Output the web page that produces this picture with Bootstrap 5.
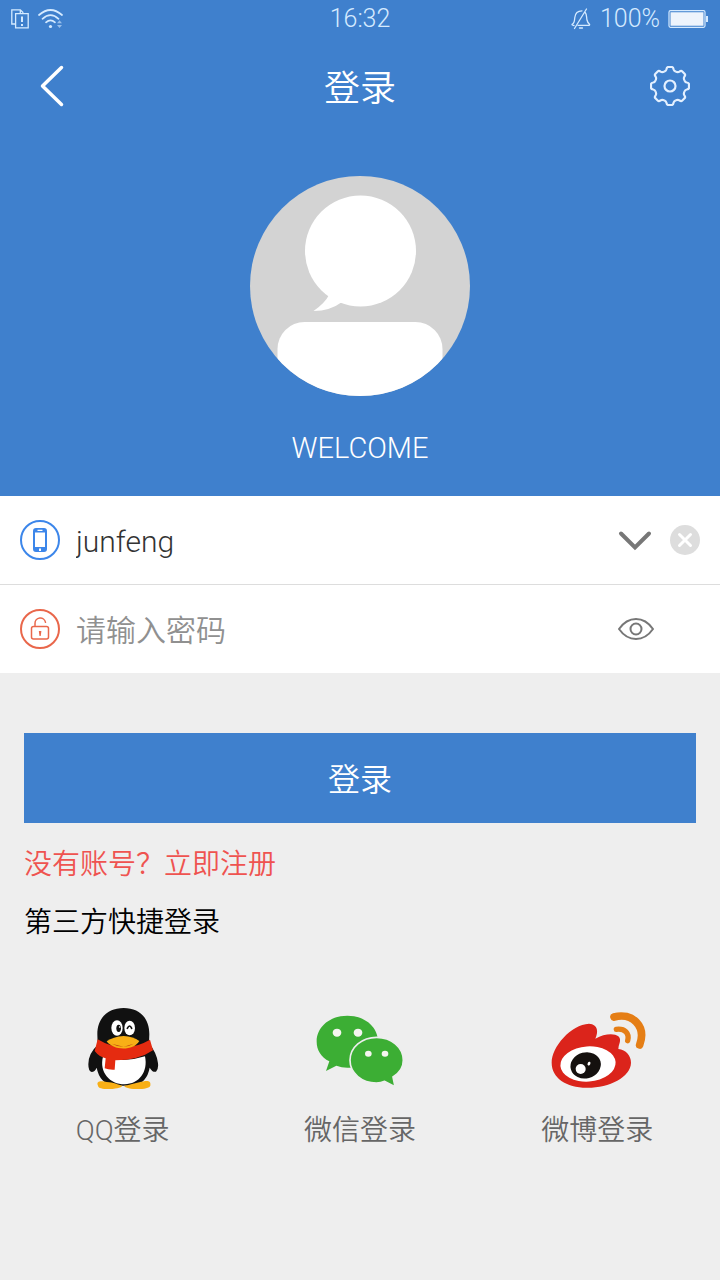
<!DOCTYPE html>
<html lang="zh-CN">
<head>
<meta charset="utf-8">
<meta name="viewport" content="width=device-width, initial-scale=1">
<title>登录</title>
<link href="https://cdn.jsdelivr.net/npm/bootstrap@5.3.0/dist/css/bootstrap.min.css" rel="stylesheet">
<style>
  :root { --brand: #3f80cd; }
  body { background: #eee; font-family: Roboto, "Noto Sans CJK SC", sans-serif; font-weight: 350; font-size: 28px; line-height: 40px; color: #000; }
  svg { display: block; flex: none; }
  .brand-area { background: var(--brand); color: #fff; }
  .status-bar { height: 38px; padding: 0 11px; color: #d5eaff; font-size: 25px; line-height: 38px; }
  .title-bar { height: 96px; padding: 0 30px; }
  .title-bar h1 { font-size: 36px; line-height: 48px; font-weight: 350; padding-top: 6px; }
  .side { flex: 1 1 0; }
  .avatar { margin-top: 42px; }
  .welcome { font-size: 29px; padding: 32px 0 28px; }
  .field { height: 88px; padding: 0 20px; gap: 16px; background: #fff; }
  .field + .field { border-top: 1px solid #ddd; height: 89px; }
  .field input { font-size: 30px; line-height: 40px; font-weight: 350; color: #333; padding-top: 4px; }
  .field input::placeholder { color: #909090; opacity: 1; }
  .field .actions { gap: 18px; }
  .no-clear { padding-right: 46px; }
  .bare { border: 0; background: none; padding: 0; color: inherit; }
  .main-area { padding: 60px 24px 0; }
  .btn-login { --bs-btn-color: #fff; --bs-btn-bg: var(--brand); --bs-btn-hover-color: #fff; --bs-btn-hover-bg: #3674be; --bs-btn-active-bg: #3069ae; --bs-btn-active-color: #fff; height: 90px; font-size: 32px; font-weight: 350; padding-top: 10px; }
  .register { color: #ef5350; margin-top: 22px; }
  .third { font-size: 28px; line-height: 40px; font-weight: 350; margin-top: 18px; }
  .providers { padding: 64px 4px 0; }
  .providers a { color: #666; gap: 20px; }
</style>
</head>
<body>
<header class="brand-area">
  <div class="status-bar d-flex align-items-center">
    <div class="side d-flex align-items-center gap-2">
      <svg width="19" height="20" viewBox="0 0 19 20" fill="none" stroke="currentColor" stroke-width="1.3"><path d="M4 15H.8V.8h8.5l3 3M9.3.8V4"/><path d="M4.6 4.6h12.6v14.2H4.6z"/><path d="M11 7.5v5.500M11 15v2" stroke-width="2"/></svg>
      <svg width="26" height="20" viewBox="0 0 26 20" fill="none" stroke="currentColor" stroke-width="1.700" stroke-linecap="round"><path d="M1 6Q12.500-4 24 6M4.500 9.800Q12.500 2.500 20.500 9.800M8 13.300Q12.500 9.300 17 13.300"/><circle cx="12.500" cy="17.500" r="1.600" fill="currentColor" stroke="none"/><path d="M19 14.300l2.500-3 2.500 3zM19 16l2.500 3L24 16z" fill="currentColor" stroke="none" opacity=".6"/></svg>
    </div>
    <time>16:32</time>
    <div class="side d-flex align-items-center justify-content-end">
      <svg class="me-2" width="22" height="22" viewBox="0 0 22 22" fill="none" stroke="currentColor" stroke-width="1.300" stroke-linecap="round" stroke-linejoin="round"><path d="M4 17.500C2 17.500 1.500 16.500 2.500 16 4.500 15 4.500 13 4.800 9.500 5.200 5.500 7.500 2.800 12 2.800M15.200 4.500C17 6.500 16.300 9 17 12c.4 2 1.200 3 2.300 4 .8.800.2 1.300-1 1.300H8M9.500 20h3M16.500 1L4.500 20.500"/></svg>
      <span>100%</span>
      <svg class="ms-2" width="41" height="18" viewBox="-1 0 41 18"><rect x="0" y=".7" width="36" height="16.600" rx="1.500" fill="none" stroke="currentColor" stroke-width="1.200"/><path d="M1.500 2.200h33v13.600h-33z" fill="#eef4fc"/><path d="M37 6h2v6h-2z" fill="currentColor"/></svg>
    </div>
  </div>
  <nav class="title-bar d-flex align-items-center" aria-label="登录">
    <div class="side d-flex"><a class="text-white" href="#" aria-label="返回"><svg width="44" height="44" viewBox="0 0 44 44" fill="none" stroke="currentColor" stroke-width="3.500" stroke-linecap="round" stroke-linejoin="round"><path d="M31.500 3.500L12.500 22l19 18.500"/></svg></a></div>
    <h1 class="mb-0">登录</h1>
    <div class="side d-flex justify-content-end"><button class="bare" type="button" aria-label="设置">
      <svg width="40" height="40" viewBox="-20 -20 40 40" fill="none" stroke="#e4f0ff" stroke-width="2.200">
        <defs><path id="tooth" d="M-5.900-14.200C-4.300-14.900-3.700-15.500-3.500-16.800Q-3.300-19-1.600-19H1.600Q3.300-19 3.500-16.800C3.700-15.500 4.300-14.900 5.900-14.200"/></defs>
        <use href="#tooth"/><use href="#tooth" transform="rotate(45)"/><use href="#tooth" transform="rotate(90)"/><use href="#tooth" transform="rotate(135)"/><use href="#tooth" transform="rotate(180)"/><use href="#tooth" transform="rotate(225)"/><use href="#tooth" transform="rotate(270)"/><use href="#tooth" transform="rotate(315)"/>
        <circle r="5.500"/>
      </svg></button></div>
  </nav>
  <svg class="avatar mx-auto" width="220" height="220" viewBox="0 0 220 220">
    <defs><clipPath id="round"><circle cx="110" cy="110" r="110"/></clipPath></defs>
    <g clip-path="url(#round)"><path fill="#d3d3d3" d="M0 0h220v220H0z"/>
    <g fill="#fff"><circle cx="110.500" cy="75" r="55.500"/><path d="M79 119Q75 127 63.500 135Q80 135 92 126L100 120L84 112z"/><rect x="27.500" y="146" width="165" height="100" rx="27"/></g></g>
  </svg>
  <p class="welcome text-center mb-0">WELCOME</p>
</header>
<form>
  <div class="field d-flex align-items-center">
    <label for="account"><svg width="40" height="40" viewBox="0 0 40 40"><circle cx="20" cy="20" r="19" fill="none" stroke="#3c86ea" stroke-width="2"/><path fill="#3c86ea" fill-rule="evenodd" d="M16 8h8q3 0 3 3v18q0 3-3 3h-8q-3 0-3-3V11q0-3 3-3zM15 12.500v14.500h10V12.500zM17.500 9.700v1.300h5V9.700zM19 28.500v2.500h2v-2.500z"/></svg></label>
    <input class="bare flex-fill w-50" id="account" type="text" value="junfeng" aria-label="账号">
    <div class="actions d-flex align-items-center">
      <button class="bare" type="button" aria-label="选择账号"><svg width="34" height="24" viewBox="0 0 34 24" fill="none" stroke="#777" stroke-width="4" stroke-linecap="round"><path d="M3 5.500L17 19.500 31 5.500"/></svg></button>
      <button class="bare" type="button" aria-label="清除"><svg width="30" height="30" viewBox="0 0 30 30"><circle cx="15" cy="15" r="15" fill="#ddd"/><path d="M9.500 9.500l11 11m0-11l-11 11" stroke="#fff" stroke-width="3" stroke-linecap="round"/></svg></button>
    </div>
  </div>
  <div class="field d-flex align-items-center">
    <label for="password"><svg width="40" height="40" viewBox="0 0 40 40" fill="none" stroke="#e9674b"><circle cx="20" cy="20" r="19" stroke-width="2"/><rect x="11.500" y="17.500" width="17" height="12.500" rx="2" stroke-width="1.500"/><path d="M15 16.500v-2a5.300 5.300 0 0 1 10.500-1.200" stroke-width="1.500" stroke-linecap="round"/><path d="M18.800 22h2.600l-.7 5h-1.200z" fill="#e9674b" stroke="none"/></svg></label>
    <input class="bare flex-fill w-50" id="password" type="password" placeholder="请输入密码" aria-label="密码">
    <div class="actions no-clear d-flex"><button class="bare" type="button" aria-label="显示密码"><svg width="36" height="22" viewBox="0 0 36 22" fill="none" stroke="#777" stroke-width="2"><path d="M1 11Q8 1 18 1T35 11Q28 21 18 21T1 11z"/><circle cx="18" cy="11" r="5.500"/></svg></button></div>
  </div>
  <div class="main-area">
    <button class="btn btn-login w-100 rounded-0 border-0" type="submit">登录</button>
    <a class="register d-table text-decoration-none" href="#">没有账号？立即注册</a>
    <h2 class="third mb-0">第三方快捷登录</h2>
  </div>
</form>
<section class="providers row g-0 text-center">
  <div class="col"><a class="d-flex flex-column align-items-center text-decoration-none" href="#">
    <svg width="100" height="84" viewBox="38 51 300 252">
      <path fill="#111" d="M112 165Q84 190 84 223 84 244 94 246 103 246 109 233 118 280 160 287H220Q260 278 268 233 277 248 287 245 295 238 293 220 290 190 266 160L267 133C267 82 236 54 190 54S111 82 111 133z"/>
      <path fill="#fff" d="M128 200Q190 220 254 199C264 246 236 282 193 283 148 283 116 246 128 200z"/>
      <path fill="#f8af16" d="M113 287C105 270 128 273 139 276 160 276 173 285 186 287 182 298 113 303 113 287zM191 287C205 287 219 280 237 277 255 273 273 268 270 287 267 301 196 300 191 287z"/>
      <path fill="#e52b10" d="M112 148Q190 195 269 149L278 181Q235 211 165 211L163 239Q145 240 133 235L136 205Q117 201 103 183z"/>
      <g fill="#fff"><ellipse cx="170" cy="114" rx="17" ry="23"/><ellipse cx="208" cy="114" rx="16" ry="22"/></g>
      <ellipse cx="175" cy="115" rx="7" ry="11" fill="#111"/><circle cx="178" cy="111" r="2.500" fill="#fff"/><path d="M201 115Q208 101 214 115" fill="none" stroke="#111" stroke-width="5" stroke-linecap="round"/>
      <path fill="#f8af16" d="M139 154Q158 140 190 138 219 140 237 153C219 184 158 182 139 154z"/><path d="M154 161Q190 180 220 161L190 170z" fill="#bb4810"/>
    </svg><span>QQ登录</span></a></div>
  <div class="col"><a class="d-flex flex-column align-items-center text-decoration-none" href="#">
    <svg width="100" height="84" viewBox="60 51 300 252">
      <path fill="#3cae34" d="M172 77C220 77 264 107 264 155S220 233 172 233Q155 233 139 227L108 243 118 214C93 201 80 180 80 155 80 107 124 77 172 77z"/>
      <path fill="#3cae34" stroke="#eee" stroke-width="5" d="M260 142C303 142 340 171 340 211 340 234 326 251 309 261L315 290 284 274Q273 279 259 279C216 279 180 250 180 211S216 142 260 142z"/>
      <g fill="#f5f5f0"><ellipse cx="141" cy="128" rx="13" ry="12"/><ellipse cx="204" cy="128" rx="13" ry="12"/><ellipse cx="235" cy="191" rx="10" ry="9"/><ellipse cx="285" cy="191" rx="10" ry="9"/></g>
    </svg><span>微信登录</span></a></div>
  <div class="col"><a class="d-flex flex-column align-items-center text-decoration-none" href="#">
    <svg width="100" height="84" viewBox="52 51 300 252">
      <path fill="#db241b" d="M66 218C66 170 124 104 178 101 206 103 206 126 197 146 235 125 280 130 270 158Q266 169 266 177C289 179 304 197 304 218 303 262 239 293 174 293 111 294 66 264 66 218z"/>
      <ellipse cx="175" cy="222" rx="83" ry="53" fill="#fff" transform="rotate(-4 175 222)"/>
      <ellipse cx="168" cy="226" rx="46" ry="39" fill="#15110f" transform="rotate(-15 168 226)"/>
      <circle cx="153" cy="237" r="15" fill="#fff"/><ellipse cx="178" cy="221" rx="4" ry="6" fill="#fff" transform="rotate(25 178 221)"/>
      <g fill="none" stroke="#e57e15" stroke-linecap="round"><path d="M253 81C307 66 351 108 330 165" stroke-width="23"/><path d="M260 118C286 115 300 130 294 152" stroke-width="16"/></g>
    </svg><span>微博登录</span></a></div>
</section>
<script src="https://cdn.jsdelivr.net/npm/bootstrap@5.3.0/dist/js/bootstrap.bundle.min.js"></script>
</body>
</html>
